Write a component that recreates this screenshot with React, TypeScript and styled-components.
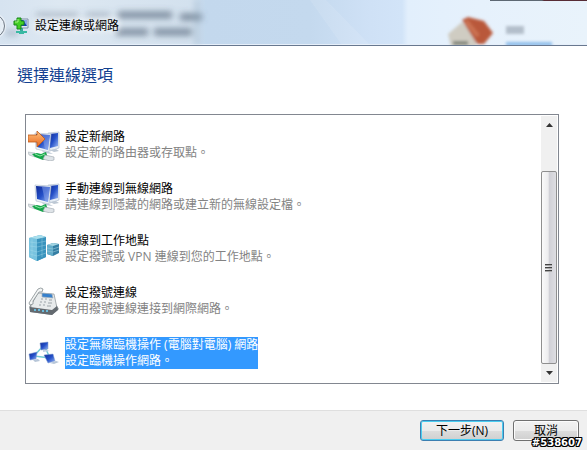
import React, { useState } from "react";
import styled, { createGlobalStyle } from "styled-components";

const GlobalStyle = createGlobalStyle`
  * { box-sizing: border-box; }
  body {
    margin: 0;
    background: #fff;
    font-family: "Open Sans", "Noto Sans CJK TC", sans-serif;
    font-size: 12px;
    line-height: 16px;
    color: #000;
  }
  button { font: inherit; color: inherit; }
`;

const Dialog = styled.div`
  position: relative;
  display: flex;
  flex-direction: column;
  min-height: 100vh;
  overflow: hidden;
`;

const TitleBar = styled.header`
  position: relative;
  display: flex;
  align-items: center;
  gap: 6px;
  height: 46px;
  padding-top: 7px;
  overflow: hidden;
  border-bottom: 1px solid #68788f;
  box-shadow: inset 0 -1px 0 #e6effa;
  background: linear-gradient(90deg, #d6e3f0 0, #dde8f2 60px, #d3e1ee 190px, #c3d8ed 206px, #c4d9ee 310px, #cfe1f6 370px, #d2e4f8 402px, #e2effc 408px, #e6f1fc 480px, #e9f3fb 100%);
`;

const GlassBackdrop = styled.svg`
  position: absolute;
  top: 0;
  left: 0;
`;

const WindowEdge = styled.div`
  position: absolute;
  top: 0;
  right: 0;
  width: 97px;
  height: 1px;
  background: linear-gradient(90deg, #5d6873 0 52px, #572c35 54px 100%);
`;

const BackButton = styled.button`
  position: relative;
  flex: none;
  width: 24px;
  height: 24px;
  margin-left: -19px;
  padding: 0;
  border: 1px solid #727b86;
  border-radius: 50%;
  background: radial-gradient(circle, #dbe6f0, #eef4fa);
  box-shadow: 0 0 1px 1px #ffffff90;
`;

const TitleIcon = styled.svg`
  position: relative;
  flex: none;
  margin-left: 2px;
`;

const WindowTitle = styled.span`
  position: relative;
  text-shadow: 0 0 6px #fff, 0 0 8px #fff;
`;

const Content = styled.main`
  flex: 1;
  display: flex;
  flex-direction: column;
  padding: 17px 28px 26px 25px;
`;

const Heading = styled.h1`
  margin: 0 0 27px -8px;
  font-size: 16px;
  line-height: 24px;
  font-weight: 400;
  color: #124191;
`;

const ListFrame = styled.div`
  flex: 1;
  display: flex;
  justify-content: space-between;
  border: 1px solid #828790;
  padding: 1px;
`;

const Options = styled.ul`
  display: flex;
  flex-direction: column;
  gap: 20px;
  margin: 0;
  padding: 13px 0 12px 1px;
  list-style: none;
`;

const Option = styled.button`
  display: flex;
  align-items: center;
  gap: 5px;
  padding: 0;
  border: 0;
  background: none;
  text-align: left;
  outline: none;
`;

const OptionIcon = styled.svg`
  display: block;
  flex: none;
`;

const OptionText = styled.span<{ $selected: boolean }>`
  display: flex;
  flex-direction: column;
  color: ${(p) => (p.$selected ? "#fff" : "#000")};
  background: ${(p) => (p.$selected ? "#3399ff" : "transparent")};
`;

const Description = styled.span<{ $selected: boolean }>`
  color: ${(p) => (p.$selected ? "#fff" : "#838383")};
`;

const Scrollbar = styled.div`
  display: flex;
  flex-direction: column;
  width: 16px;
  background: #f0f0f0;
`;

const ScrollArrow = styled.button`
  display: grid;
  place-items: center;
  height: 18px;
  padding: 0;
  border: 0;
  background: transparent;
`;

const Track = styled.div`
  flex: 1;
  display: flex;
  padding-top: 37px;
`;

const Thumb = styled.div`
  flex: 1;
  display: flex;
  flex-direction: column;
  justify-content: center;
  align-items: center;
  gap: 1px;
  padding-right: 1px;
  border: 1px solid #8f8f8f;
  border-radius: 2px;
  background: linear-gradient(90deg, #fafafa 0, #ececee 45%, #d0d0d6 50%, #dedee2 100%);
`;

const Grip = styled.span`
  width: 7px;
  height: 2px;
  border-top: 1px solid #444;
  border-bottom: 1px solid #aaa;
`;

const Footer = styled.footer`
  display: flex;
  justify-content: flex-end;
  gap: 9px;
  height: 40px;
  padding: 9px 8px;
  border-top: 1px solid #dfdfdf;
  background: #f0f0f0;
`;

const ActionButton = styled.button<{ $primary?: boolean }>`
  width: ${(p) => (p.$primary ? 84 : 66)}px;
  height: 21px;
  padding: 0;
  border: 1px solid ${(p) => (p.$primary ? "#3c7fb1" : "#707070")};
  border-radius: 3px;
  background: linear-gradient(#f2f2f2 0 0, #ebebeb 50%, #dddddd 51%, #cfcfcf);
  box-shadow: inset 0 0 0 1px ${(p) => (p.$primary ? "#4bcdf0" : "#fcfcfc")};
  line-height: 18px;
`;

const PhotoTag = styled.span`
  position: absolute;
  right: 5px;
  bottom: 0;
  font: bold 10px/14px "DejaVu Sans", sans-serif;
  color: #fff;
  text-shadow: -1px -1px 0 #000, 0 -1px 0 #000, 1px -1px 0 #000, -1px 0 0 #000,
    1px 0 0 #000, -1px 1px 0 #000, 0 1px 0 #000, 1px 1px 0 #000;
`;

const Computers = () => (
  <>
    <path d="M20 4l11-1v16l-9 3z" fill="#e6edf5" stroke="#a9b9cb" strokeWidth=".6" />
    <path d="M21 5l9-1v13l-8 2z" fill="url(#screen)" />
    <path d="M7 4l16 1-2 18-13-3z" fill="#eef3f8" stroke="#a9b9cb" strokeWidth=".6" />
    <path d="M8 5l14 1-2 15-11-3z" fill="url(#screen)" />
    <path d="M14 6l8 0-2 15-3-1z" fill="#8ba5ec" opacity=".5" />
    <path d="M14 22l7 1 4 2-9-1zM22 21l6-1 3 2-5 1z" fill="#bdc8d4" />
    <path d="M0 23l7 1v4l-6-2z" fill="#dbe1e5" stroke="#a3acb2" strokeWidth=".5" />
    <path d="M4 25l5-1 4 1 5-2 2 6-5 2-8-3z" fill="#15a54a" />
    <path d="M7 25l5 2 5-2" fill="none" stroke="#8be6a2" />
    <path d="M17 26l9 2v3l-4 1-7-2z" fill="#dfe4e8" stroke="#9aa3ab" strokeWidth=".6" />
  </>
);

const NewNetwork = () => (
  <>
    <Computers />
    <path d="M0 6h9V2l8 8-8 8v-5H0z" fill="url(#arrow)" stroke="#bd5a1c" strokeWidth=".8" />
  </>
);

const Workplace = () => (
  <>
    <path d="M1 5l11-3 6 2v20L9 28l-8-4z" fill="#4da3ca" />
    <path d="M1 5l8 1v22l-8-4z" fill="#78c3df" />
    <path d="M9 6l9-2v20l-9 4z" fill="#3993bd" />
    <path d="M1 5l11-3 6 2-9 2z" fill="#a9dfed" />
    <path d="M2 9l7 1 9-2M2 13l7 1 9-2M2 17l7 2 9-3M2 21l7 2 9-3M4 6v18M14 5v19" fill="none" stroke="#b1e1ef" strokeWidth=".6" opacity=".6" />
    <path d="M19 12l6-2 6 1v9l-6 3-6-2z" fill="#357fa4" />
    <path d="M19 12l6 1v10l-6-2z" fill="#62adca" />
    <path d="M19 12l6-2 6 1-6 2z" fill="#a2d5e3" />
    <path d="M19 15l6 1 6-2M19 18l6 1 6-2" fill="none" stroke="#99cbdc" strokeWidth=".6" />
  </>
);

const Phone = () => (
  <>
    <path d="M1 22l5-8 19 1 6 9-7 6-22-3z" fill="#9aa0a3" />
    <path d="M3 20L10 8l16 1 3 14-5 4-21-3z" fill="#e8ebec" stroke="#8a9194" strokeWidth=".7" />
    <path d="M2 22l22 3 5-4 1 4-6 5-22-3z" fill="#636a70" />
    <path d="M6 25h2m2 0h2m2 1h2m2 0h2" stroke="#69badb" strokeWidth="2" />
    <path d="M14 8l10 1 1 4-11-1z" fill="#3680cc" stroke="#aab3ba" strokeWidth=".7" />
    <path d="M13 14h2m2 0h2m2 1h3M12 17h2m2 0h2m2 1h4M11 20h2m2 0h2m2 1h4" stroke="#9ba3a7" strokeWidth="1.2" />
    <path d="M1 18L10 4q3-2 5 0l-1 3-3 0-6 9 0 3-3 1z" fill="#f3f5f5" stroke="#858e92" strokeWidth=".8" />
  </>
);

const AdHoc = () => (
  <>
    <path d="M16 8L6 19l16 2z" fill="none" stroke="#72cbd5" strokeWidth="1.5" />
    <path d="M12 6l8-1v7l-7 1z" fill="url(#screen)" stroke="#7f9dca" strokeWidth=".5" />
    <path d="M15 13l4 0 3 1-7 1z" fill="#c3d2e2" />
    <path d="M1 17l8-2-1 7-6 1z" fill="url(#screen)" stroke="#7e9dce" strokeWidth=".5" />
    <path d="M5 23l5-1 2 2-5 1z" fill="#b7c6d8" />
    <path d="M16 18l9-1 2 7-7 2z" fill="url(#screen)" stroke="#7e9dce" strokeWidth=".5" />
    <path d="M22 26l6-2 3 1-5 2z" fill="#b7c6d8" />
  </>
);

const options = [
  { title: "設定新網路", description: "設定新的路由器或存取點。", Icon: NewNetwork },
  { title: "手動連線到無線網路", description: "請連線到隱藏的網路或建立新的無線設定檔。", Icon: Computers },
  { title: "連線到工作地點", description: "設定撥號或 VPN 連線到您的工作地點。", Icon: Workplace },
  { title: "設定撥號連線", description: "使用撥號連線連接到網際網路。", Icon: Phone },
  { title: "設定無線臨機操作 (電腦對電腦) 網路", description: "設定臨機操作網路。", Icon: AdHoc },
];

export default function App() {
  const [selected, setSelected] = useState(4);

  return (
    <Dialog>
      <GlobalStyle />
      <TitleBar>
        <GlassBackdrop width="587" height="45" aria-hidden="true">
          <defs>
            <filter id="soft" x="-20%" y="-50%" width="140%" height="200%">
              <feGaussianBlur stdDeviation="3" />
            </filter>
            <filter id="softHouse" x="-20%" y="-20%" width="140%" height="140%">
              <feGaussianBlur stdDeviation="1.6" />
            </filter>
            <linearGradient id="screen" x2="1" y2="1">
              <stop stopColor="#102a96" />
              <stop offset=".5" stopColor="#2450c8" />
              <stop offset="1" stopColor="#9ab8f4" />
            </linearGradient>
            <linearGradient id="arrow" x2="0" y2="1">
              <stop stopColor="#ffc27d" />
              <stop offset="1" stopColor="#e8651d" />
            </linearGradient>
          </defs>
          <path d="M310 0h16l44 45h-28z" fill="#fff" opacity=".1" />
          <g filter="url(#soft)">
            <path d="M36 15h42M86 15h24M6 33h12" stroke="#53677a" strokeWidth="5" opacity=".35" />
            <path d="M118 15h54M180 17h22M116 32h32M154 32h38" stroke="#43586c" strokeWidth="7" opacity=".6" />
            <path d="M197 0v45" stroke="#92a8bb" strokeWidth="3" opacity=".55" />
          </g>
          <g filter="url(#softHouse)">
            <path d="M448 34l14-12 14 14v11h-25z" fill="#cfccc2" />
            <path d="M462 20l6-3 16 4 9 12-9 11h-7z" fill="#b9583a" />
            <path d="M466 21l12 15" stroke="#cc7353" strokeWidth="4" />
            <path d="M453 43h15" stroke="#83877b" strokeWidth="4" />
            <path d="M506 30h18" stroke="#8996a3" strokeWidth="8" opacity=".55" />
            <path d="M506 44h46" stroke="#6ba8e3" strokeWidth="4" opacity=".7" />
          </g>
        </GlassBackdrop>
        <WindowEdge />
        <BackButton aria-label="上一頁" />
        <TitleIcon width="16" height="18" viewBox="0 0 16 18" aria-hidden="true">
          <path d="M7 2h8v9H7z" fill="#e0e9f4" stroke="#7f91a7" />
          <path d="M8 3h6v6H8z" fill="#173faf" />
          <path d="M10 3h4v6z" fill="#89a7e8" />
          <path d="M7 11h3v3H7z" fill="#39a99b" />
          <path d="M3 14h11v2H11v1H6v-1H3z" fill="#38b9a3" />
          <path d="M4 1h4v3h3v4H8v4H4V8H1V4h3z" fill="#43cf25" stroke="#19871a" />
          <path d="M5 2v3H2" fill="none" stroke="#a7f282" />
        </TitleIcon>
        <WindowTitle>設定連線或網路</WindowTitle>
      </TitleBar>

      <Content>
        <Heading>選擇連線選項</Heading>
        <ListFrame>
          <Options>
            {options.map(({ title, description, Icon }, index) => (
              <li key={title}>
                <Option aria-pressed={selected === index} onClick={() => setSelected(index)}>
                  <OptionIcon width="32" height="32" viewBox="0 0 32 32" aria-hidden="true">
                    <Icon />
                  </OptionIcon>
                  <OptionText $selected={selected === index}>
                    <span>{title}</span>
                    <Description $selected={selected === index}>{description}</Description>
                  </OptionText>
                </Option>
              </li>
            ))}
          </Options>
          <Scrollbar>
            <ScrollArrow aria-label="向上捲動">
              <svg width="7" height="4"><path d="M0 4l3.500-4L7 4z" fill="#333" /></svg>
            </ScrollArrow>
            <Track>
              <Thumb><Grip /><Grip /><Grip /></Thumb>
            </Track>
            <ScrollArrow aria-label="向下捲動">
              <svg width="7" height="4"><path d="M0 0h7L3.500 4z" fill="#333" /></svg>
            </ScrollArrow>
          </Scrollbar>
        </ListFrame>
      </Content>

      <Footer>
        <ActionButton $primary>下一步(N)</ActionButton>
        <ActionButton>取消</ActionButton>
      </Footer>
      <PhotoTag>#538607</PhotoTag>
    </Dialog>
  );
}
